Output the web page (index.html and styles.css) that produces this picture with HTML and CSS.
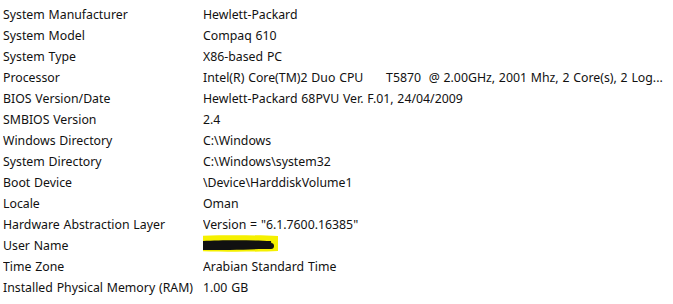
FILE: index.html
```html
<!DOCTYPE html>
<html>
<head>
<meta charset="utf-8">
<link rel="stylesheet" href="styles.css">
</head>
<body>
<div class="info">
  <div class="k">System Manufacturer</div><div class="v">Hewlett-Packard</div>
  <div class="k">System Model</div><div class="v">Compaq 610</div>
  <div class="k">System Type</div><div class="v">X86-based PC</div>
  <div class="k">Processor</div><div class="v pre">Intel(R) Core(TM)2 Duo CPU      T5870  @ 2.00GHz, 2001 Mhz, 2 Core(s), 2 Log...</div>
  <div class="k">BIOS Version/Date</div><div class="v">Hewlett-Packard 68PVU Ver. F.01, 24/04/2009</div>
  <div class="k">SMBIOS Version</div><div class="v">2.4</div>
  <div class="k">Windows Directory</div><div class="v">C:\Windows</div>
  <div class="k">System Directory</div><div class="v">C:\Windows\system32</div>
  <div class="k">Boot Device</div><div class="v">\Device\HarddiskVolume1</div>
  <div class="k">Locale</div><div class="v">Oman</div>
  <div class="k">Hardware Abstraction Layer</div><div class="v">Version = "6.1.7600.16385"</div>
  <div class="k">User Name</div><div class="v"><svg class="redact" width="84" height="21" viewBox="0 0 84 21"><path d="M1 1 C 20 0, 60 0, 82 1 L 82 16 C 60 17, 20 17, 1 16 Z" fill="#f5f000"/><path d="M7 6 C 25 5, 55 5, 75 6 L 76 13 C 60 15, 30 15, 7 15 Z" fill="#111"/><path d="M8 11 L 75 11" stroke="#111" stroke-width="6" stroke-linecap="round"/></svg></div>
  <div class="k">Time Zone</div><div class="v">Arabian Standard Time</div>
  <div class="k">Installed Physical Memory (RAM)</div><div class="v">1.00 GB</div>
</div>
</body>
</html>
```
FILE: styles.css
```css
html, body {
  margin: 0;
  padding: 0;
  background: #ffffff;
}
body {
  padding: 4px 0 0 3px;
  font-family: "Noto Sans", "Open Sans", sans-serif;
  font-size: 12.3px;
  word-spacing: 0.6px;
  color: #111;
}
.info {
  display: grid;
  grid-template-columns: 200px 1fr;
  grid-auto-rows: 21px;
  line-height: 21px;
}
.k, .v {
  white-space: nowrap;
  overflow: hidden;
}
.pre {
  white-space: pre;
}
.redact {
  display: block;
  margin-left: -7px;
}
```
